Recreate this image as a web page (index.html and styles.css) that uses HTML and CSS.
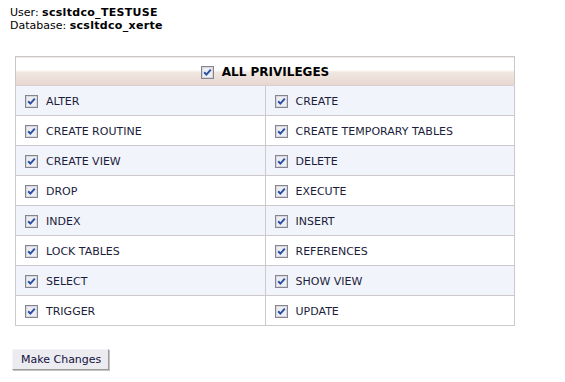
FILE: index.html
```html
<!DOCTYPE html>
<html lang="en">
<head>
  <meta charset="UTF-8" />
  <meta name="viewport" content="width=device-width, initial-scale=1.0"/>
  <title>Manage User Privileges</title>
  <link rel="stylesheet" href="styles.css">
</head>
<body>
  <div class="info">
    <div>User: <strong>scsltdco_TESTUSE</strong></div>
    <div>Database: <strong>scsltdco_xerte</strong></div>
  </div>
  <table id="priv-table">
    <thead>
      <tr>
        <th colspan="2">
          <label class="priv"><span class="cb" data-priv="ALL"></span>ALL PRIVILEGES</label>
        </th>
      </tr>
    </thead>
    <tbody>
    </tbody>
  </table>
  <div class="actions">
    <button class="btn" onclick="saveChanges()">Make Changes</button>
  </div>
  <script>
    const privileges = [
      "ALTER", "CREATE",
      "CREATE ROUTINE", "CREATE TEMPORARY TABLES",
      "CREATE VIEW", "DELETE",
      "DROP", "EXECUTE",
      "INDEX", "INSERT",
      "LOCK TABLES", "REFERENCES",
      "SELECT", "SHOW VIEW",
      "TRIGGER", "UPDATE"
    ];
    const checkSvg = `<svg width="13" height="13" viewBox="0 0 13 13">
      <rect x="0.5" y="0.5" width="12" height="12" fill="#eceef2" stroke="#858590"/>
      <rect x="1.5" y="1.5" width="10" height="10" fill="none" stroke="#d6d6de"/>
      <path d="M3.2 6.2 L5.4 8.6 L9.8 3.6" fill="none" stroke="#2c4fa6" stroke-width="2"/>
    </svg>`;
    function renderTable() {
      const tbody = document.querySelector("#priv-table tbody");
      tbody.innerHTML = "";
      for (let i = 0; i < privileges.length; i += 2) {
        const row = document.createElement("tr");
        row.className = (i / 2) % 2 === 0 ? "odd" : "even";
        row.innerHTML = `
          <td><label class="priv"><span class="cb"></span>${privileges[i]}</label></td>
          <td><label class="priv"><span class="cb"></span>${privileges[i + 1]}</label></td>
        `;
        tbody.appendChild(row);
      }
      document.querySelectorAll(".cb").forEach(cb => cb.innerHTML = checkSvg);
    }
    function saveChanges() {
      alert("Privileges updated.");
    }
    renderTable();
  </script>
</body>
</html>
```

FILE: styles.css
```css
body {
  font-family: "DejaVu Sans", Verdana, sans-serif;
  font-size: 11px;
  color: #1c1c3c;
  background: #fff;
  margin: 0;
  padding: 6px 10px;
}
.info {
  line-height: 13px;
  color: #000;
}
.info strong {
  font-weight: bold;
  letter-spacing: 0.3px;
}
table {
  width: 500px;
  margin: 24px 0 0 5px;
  border-collapse: collapse;
  border: 1px solid #c8c8c8;
}
th {
  height: 28px;
  padding: 0;
  font-size: 12px;
  font-weight: bold;
  color: #000;
  text-align: center;
  border-bottom: 1px solid #d8d0d0;
  background: linear-gradient(to bottom, #fff 0, #fff 13px, #f2e8e2 14px, #e6d6cf 100%);
}
th .priv {
  justify-content: center;
  gap: 8px;
  padding-top: 2px;
}
td {
  width: 50%;
  height: 28px;
  padding: 1px 0 0 9px;
  border: 1px solid #ccc8cc;
}
tr.odd td {
  background: #f2f4fb;
}
tr.even td {
  background: #fff;
}
.priv {
  display: flex;
  align-items: center;
  gap: 8px;
}
.cb {
  display: inline-flex;
  width: 13px;
  height: 13px;
}
.actions {
  margin-top: 23px;
  margin-left: 2px;
}
.btn {
  font-family: "DejaVu Sans", Verdana, sans-serif;
  font-size: 11px;
  color: #101040;
  background: #ececf0;
  padding: 3px 7px 3px 8px;
  border: 1px solid;
  border-color: #f4f4f8 #9a9a9a #9a9a9a #f4f4f8;
  box-shadow: 1px 1px 0 #c4c4c4;
  cursor: pointer;
}
```
